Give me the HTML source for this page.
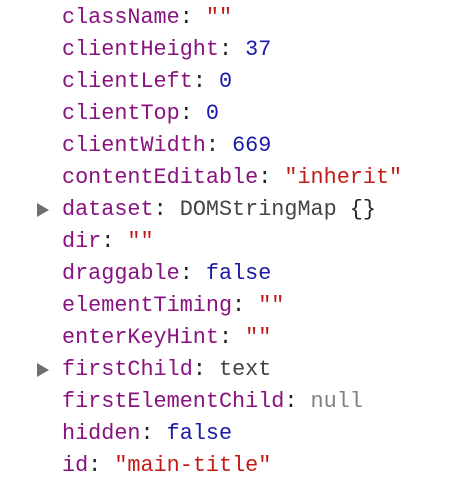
<!DOCTYPE html>
<html><head><meta charset="utf-8"><style>
html,body{margin:0;padding:0;background:#fff;width:450px;height:488px;overflow:hidden}
.w{padding-top:2px;font-family:"Liberation Mono",monospace;font-size:21.8px;line-height:32px}
.l{padding-left:62px;position:relative;height:32px;white-space:pre}
.k{color:#881280}.c{color:#222}.n{color:#1a1aa6}.s{color:#c41a16}.g{color:#808080}.o{color:#444}
.t:before{content:"";position:absolute;left:37px;top:9px;border-left:12px solid #6e6e6e;border-top:7px solid transparent;border-bottom:7px solid transparent}
</style></head><body><div class="w"><div class="l"><span class="k">className</span><span class="c">: </span><span class="s">""</span></div><div class="l"><span class="k">clientHeight</span><span class="c">: </span><span class="n">37</span></div><div class="l"><span class="k">clientLeft</span><span class="c">: </span><span class="n">0</span></div><div class="l"><span class="k">clientTop</span><span class="c">: </span><span class="n">0</span></div><div class="l"><span class="k">clientWidth</span><span class="c">: </span><span class="n">669</span></div><div class="l"><span class="k">contentEditable</span><span class="c">: </span><span class="s">"inherit"</span></div><div class="l t"><span class="k">dataset</span><span class="c">: </span><span class="o">DOMStringMap </span><span class="c">{}</span></div><div class="l"><span class="k">dir</span><span class="c">: </span><span class="s">""</span></div><div class="l"><span class="k">draggable</span><span class="c">: </span><span class="n">false</span></div><div class="l"><span class="k">elementTiming</span><span class="c">: </span><span class="s">""</span></div><div class="l"><span class="k">enterKeyHint</span><span class="c">: </span><span class="s">""</span></div><div class="l t"><span class="k">firstChild</span><span class="c">: </span><span class="o">text</span></div><div class="l"><span class="k">firstElementChild</span><span class="c">: </span><span class="g">null</span></div><div class="l"><span class="k">hidden</span><span class="c">: </span><span class="n">false</span></div><div class="l"><span class="k">id</span><span class="c">: </span><span class="s">"main-title"</span></div></div></body></html>
